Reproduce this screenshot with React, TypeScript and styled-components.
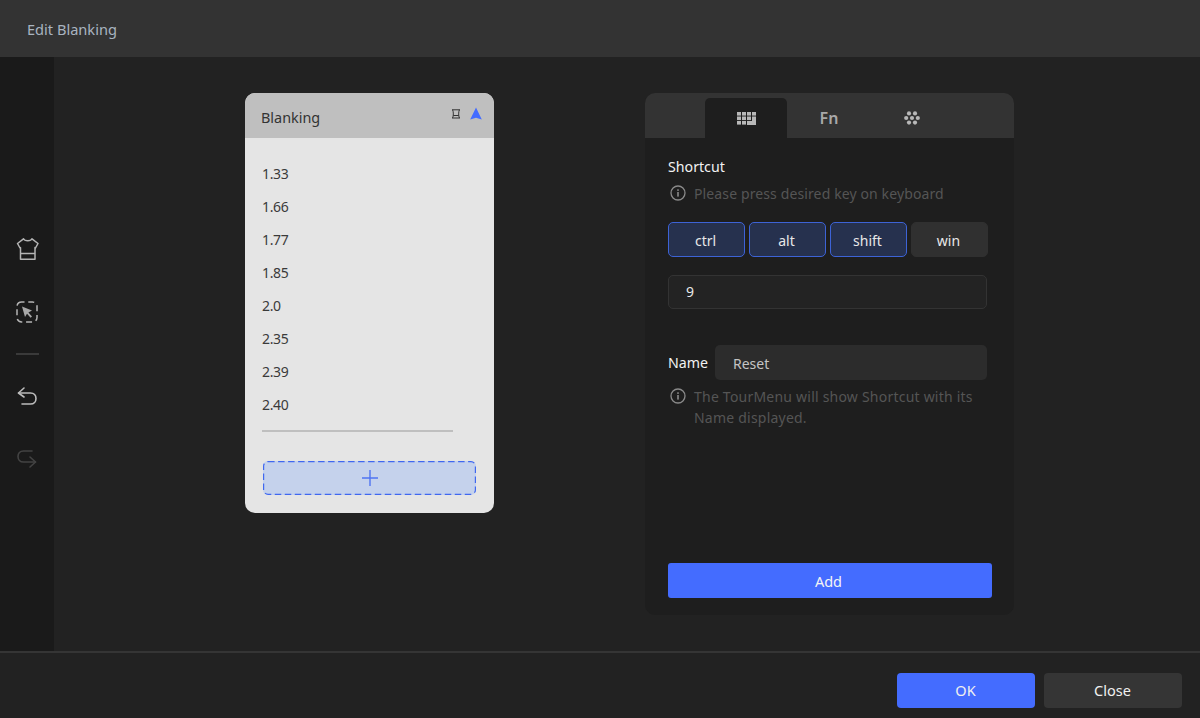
import React from "react";
import styled, { createGlobalStyle } from "styled-components";

const Global = createGlobalStyle`
  html, body { margin: 0; padding: 0; background: #222222; }
  body { font-family: "Noto Sans", "Open Sans", sans-serif; }
  * { box-sizing: border-box; }
`;

const Shell = styled.div`
  width: 1200px;
  height: 718px;
  display: flex;
  flex-direction: column;
  background: #222222;
  overflow: hidden;
`;
const TitleBar = styled.header`
  height: 57px;
  flex: none;
  background: #333333;
  display: flex;
  align-items: center;
  padding-left: 27px;
  color: #a9b4c0;
  font-size: 14.6px;
`;
const Middle = styled.div`
  flex: 1;
  display: flex;
  min-height: 0;
`;
const SideBar = styled.nav`
  width: 54px;
  flex: none;
  background: #1a1a1a;
  display: flex;
  flex-direction: column;
  align-items: center;
  justify-content: center;
  padding-bottom: 1px;
`;
const SideIcon = styled.div<{ $after: number }>`
  width: 24px;
  height: 24px;
  margin-bottom: ${(p) => p.$after}px;
  display: flex;
`;
const SideRule = styled.div`
  width: 23px;
  height: 2px;
  background: #3a3a3a;
  margin-bottom: 29px;
`;
const Content = styled.main`
  flex: 1;
  display: flex;
  align-items: flex-start;
  padding: 36px 0 0 191px;
  gap: 151px;
`;
const Card = styled.section`
  width: 249px;
  height: 420px;
  border-radius: 10px;
  overflow: hidden;
  background: #e5e5e5;
  flex: none;
`;
const CardHead = styled.div`
  height: 45px;
  background: #bfbfbf;
  display: flex;
  align-items: center;
  padding: 0 12px 0 16px;
  color: #333333;
  font-size: 14.4px;
`;
const CardTitle = styled.span`
  flex: 1;
  position: relative;
  top: 2px;
`;
const CardTools = styled.div`
  display: flex;
  align-items: center;
  gap: 9px;
  margin-top: -4px;
`;
const List = styled.ul`
  list-style: none;
  margin: 0;
  padding: 19px 0 0 17px;
`;
const ListItem = styled.li`
  height: 33px;
  line-height: 33px;
  font-size: 14px;
  color: #3a3a3a;
  letter-spacing: -0.35px;
`;
const ListRule = styled.div`
  width: 191px;
  height: 2px;
  margin: 9px 0 0 17px;
  background: #bfbfbf;
`;
const AddSlot = styled.div`
  position: relative;
  width: 213px;
  height: 34px;
  margin: 29px 0 0 18px;
  border-radius: 5px;
  background: #c5d2ec;
  display: flex;
  align-items: center;
  justify-content: center;
`;
const DashOverlay = styled.svg`
  position: absolute;
  inset: 0;
`;
const Panel = styled.section`
  width: 369px;
  height: 522px;
  flex: none;
  background: #1e1e1e;
  border-radius: 10px;
  overflow: hidden;
  display: flex;
  flex-direction: column;
`;
const Tabs = styled.div`
  height: 45px;
  flex: none;
  background: #333333;
  display: flex;
  align-items: flex-end;
  gap: 1px;
  padding-left: 60px;
`;
const Tab = styled.div<{ $active?: boolean }>`
  width: 82px;
  height: 40px;
  border-radius: 5px 5px 0 0;
  background: ${(p) => (p.$active ? "#1e1e1e" : "transparent")};
  display: flex;
  align-items: center;
  justify-content: center;
`;
const FnLabel = styled.span`
  color: #a8a8a8;
  font-family: "Noto Sans", sans-serif;
  font-size: 16px;
  font-weight: 600;
  line-height: 1;
`;
const PanelBody = styled.div`
  flex: 1;
  display: flex;
  flex-direction: column;
  padding: 19px 22px 17px 23px;
`;
const Label = styled.div`
  color: #f2f2f2;
  font-size: 14.2px;
  line-height: 20px;
`;
const Hint = styled.div<{ $spacing: number }>`
  display: flex;
  gap: 8px;
  margin-top: 6px;
  color: #555555;
  font-size: 14px;
  line-height: 21px;
  letter-spacing: ${(p) => p.$spacing}px;
`;
const HintIcon = styled.svg`
  flex: none;
  margin: 2px 0 0 2px;
`;
const HintText = styled.div`
  width: 290px;
`;
const Keys = styled.div`
  display: flex;
  gap: 4px;
  margin-top: 18px;
`;
const Key = styled.div<{ $on?: boolean }>`
  width: 77px;
  height: 35px;
  border-radius: 5px;
  border: 1px solid ${(p) => (p.$on ? "#3d63d6" : "#303030")};
  background: ${(p) => (p.$on ? "#26314e" : "#303030")};
  color: #e8e8e8;
  font-size: 14px;
  display: flex;
  align-items: center;
  justify-content: center;
  padding: 2px 2px 0 0;
`;
const KeyField = styled.div`
  width: 319px;
  height: 34px;
  margin-top: 18px;
  border: 1px solid #333333;
  border-radius: 5px;
  background: #232323;
  color: #e8e8e8;
  font-size: 14px;
  display: flex;
  align-items: center;
  padding: 0 0 2px 17px;
`;
const NameRow = styled.div`
  display: flex;
  align-items: center;
  gap: 7px;
  margin-top: 36px;
`;
const NameField = styled.div`
  width: 272px;
  height: 35px;
  border-radius: 5px;
  background: #2c2c2c;
  color: #c4c4c4;
  font-size: 14px;
  display: flex;
  align-items: center;
  padding: 2px 0 0 18px;
`;
const AddButton = styled.div`
  margin-top: auto;
  width: 324px;
  height: 35px;
  border-radius: 3px;
  background: #446cff;
  color: #f4f4f4;
  font-size: 14.5px;
  display: flex;
  align-items: center;
  justify-content: center;
  padding: 0 3px 0 0;
`;
const Footer = styled.footer`
  height: 67px;
  flex: none;
  border-top: 2px solid #353535;
  display: flex;
  justify-content: flex-end;
  align-items: flex-start;
  gap: 9px;
  padding: 20px 18px 0 0;
`;
const FootButton = styled.div<{ $primary?: boolean }>`
  width: 138px;
  height: 35px;
  border-radius: 4px;
  background: ${(p) => (p.$primary ? "#446cff" : "#353535")};
  color: #f0f0f0;
  font-size: 14.5px;
  display: flex;
  align-items: center;
  justify-content: center;
  padding: 0 1px 1px 0;
`;

const Info = () => (
  <HintIcon width="16" height="16" viewBox="0 0 16 16" fill="none">
    <circle cx="8" cy="8" r="7" stroke="#8a8a8a" strokeWidth="1.3" />
    <rect x="7.2" y="7" width="1.6" height="4.6" fill="#8a8a8a" />
    <rect x="7.2" y="4.3" width="1.6" height="1.6" fill="#8a8a8a" />
  </HintIcon>
);

const keyboardCells = [
  [0, 0], [5, 0], [10, 0], [15, 0],
  [0, 4.5], [5, 4.5], [10, 4.5],
  [0, 9], [5, 9],
];

export default function App() {
  return (
    <>
      <Global />
      <Shell>
        <TitleBar>Edit Blanking</TitleBar>
        <Middle>
          <SideBar>
            <SideIcon $after={39}>
              <svg width="24" height="24" viewBox="0 0 24 24" fill="none" stroke="#b4b4b4" strokeWidth="1.5" strokeLinejoin="round">
                <path d="M8.5 1.8 L2.5 6.5 L5 11 L5.5 10.6 V22.2 H20 V10.6 L20.5 11 L23 6.5 L17 1.8 C15.8 4.4 9.7 4.4 8.5 1.8 Z" />
                <path d="M5.5 16.5 H20" />
              </svg>
            </SideIcon>
            <SideIcon $after={29}>
              <svg width="24" height="24" viewBox="0 0 24 24" fill="none">
                <rect x="2" y="2" width="20" height="20" rx="4.5" stroke="#b4b4b4" strokeWidth="1.5" strokeDasharray="6 3.8" strokeDashoffset="3" />
                <path d="M7 6.5 L17 10.5 L13.4 12.4 L17 16.5 L15.6 17.8 L12 13.7 L10 17 Z" fill="#a8a8a8" />
              </svg>
            </SideIcon>
            <SideRule />
            <SideIcon $after={38}>
              <svg width="24" height="24" viewBox="0 0 24 24" fill="none" stroke="#bcbcbc" strokeWidth="1.6" strokeLinecap="round" strokeLinejoin="round">
                <path d="M9 4 L3.5 9 L9 13" />
                <path d="M3.5 9 H15.5 C19 9 21 11.5 21 14.5 C21 17.5 19 20 15.5 20 H7" />
              </svg>
            </SideIcon>
            <SideIcon $after={0}>
              <svg width="24" height="24" viewBox="0 0 24 24" fill="none" stroke="#434343" strokeWidth="1.6" strokeLinecap="round" strokeLinejoin="round">
                <path d="M15 11 L20.5 16 L15 21" />
                <path d="M20.5 16 H8.5 C5 16 3 13.5 3 10.5 C3 7.5 5 5 8.5 5 H17" />
              </svg>
            </SideIcon>
          </SideBar>
          <Content>
            <Card>
              <CardHead>
                <CardTitle>Blanking</CardTitle>
                <CardTools>
                  <svg width="10" height="10" viewBox="0 0 10 10" fill="none" stroke="#333" strokeWidth="1">
                    <path d="M1 .8 H9 M1 9 H9 M1.6 .8 C2.6 3 2.6 6.8 1.6 9 M8.4 .8 C7.4 3 7.4 6.8 8.4 9 M2.3 6.5 H7.7" />
                  </svg>
                  <svg width="12" height="13" viewBox="0 0 12 13">
                    <path d="M6 .5 L11.8 12.5 L6 10.8 L.2 12.5 Z" fill="#446cff" />
                  </svg>
                </CardTools>
              </CardHead>
              <List>
                {["1.33", "1.66", "1.77", "1.85", "2.0", "2.35", "2.39", "2.40"].map((v) => (
                  <ListItem key={v}>{v}</ListItem>
                ))}
              </List>
              <ListRule />
              <AddSlot>
                <DashOverlay width="213" height="34" viewBox="0 0 213 34" fill="none">
                  <rect x=".6" y=".6" width="211.8" height="32.8" rx="4.5" stroke="#4068f0" strokeWidth="1.2" strokeDasharray="6.5 3.5" />
                </DashOverlay>
                <svg width="16" height="16" viewBox="0 0 16 16" stroke="#4f74f2" strokeWidth="1.4">
                  <path d="M0 8 H16 M8 0 V16" />
                </svg>
              </AddSlot>
            </Card>
            <Panel>
              <Tabs>
                <Tab $active>
                  <svg width="19" height="13" viewBox="0 0 19 13" fill="#b8b8b8">
                    {keyboardCells.map(([x, y]) => (
                      <rect key={`${x}-${y}`} x={x} y={y} width="4" height="3.6" />
                    ))}
                    <path d="M15 4.5 H19 V13 H10 V9 H15 Z" />
                  </svg>
                </Tab>
                <Tab>
                  <FnLabel>Fn</FnLabel>
                </Tab>
                <Tab>
                  <svg width="16" height="14" viewBox="0 0 16 14" fill="#b8b8b8">
                    <circle cx="5" cy="2.4" r="2.1" />
                    <circle cx="11" cy="2.4" r="2.1" />
                    <circle cx="2.2" cy="7" r="2.1" />
                    <circle cx="8" cy="7" r="2.1" />
                    <circle cx="13.8" cy="7" r="2.1" />
                    <circle cx="5" cy="11.6" r="2.1" />
                    <circle cx="11" cy="11.6" r="2.1" />
                  </svg>
                </Tab>
              </Tabs>
              <PanelBody>
                <Label>Shortcut</Label>
                <Hint $spacing={0.12}>
                  <Info />
                  <HintText>Please press desired key on keyboard</HintText>
                </Hint>
                <Keys>
                  <Key $on>ctrl</Key>
                  <Key $on>alt</Key>
                  <Key $on>shift</Key>
                  <Key>win</Key>
                </Keys>
                <KeyField>9</KeyField>
                <NameRow>
                  <Label>Name</Label>
                  <NameField>Reset</NameField>
                </NameRow>
                <Hint $spacing={0.22}>
                  <Info />
                  <HintText>The TourMenu will show Shortcut with its Name displayed.</HintText>
                </Hint>
                <AddButton>Add</AddButton>
              </PanelBody>
            </Panel>
          </Content>
        </Middle>
        <Footer>
          <FootButton $primary>OK</FootButton>
          <FootButton>Close</FootButton>
        </Footer>
      </Shell>
    </>
  );
}
